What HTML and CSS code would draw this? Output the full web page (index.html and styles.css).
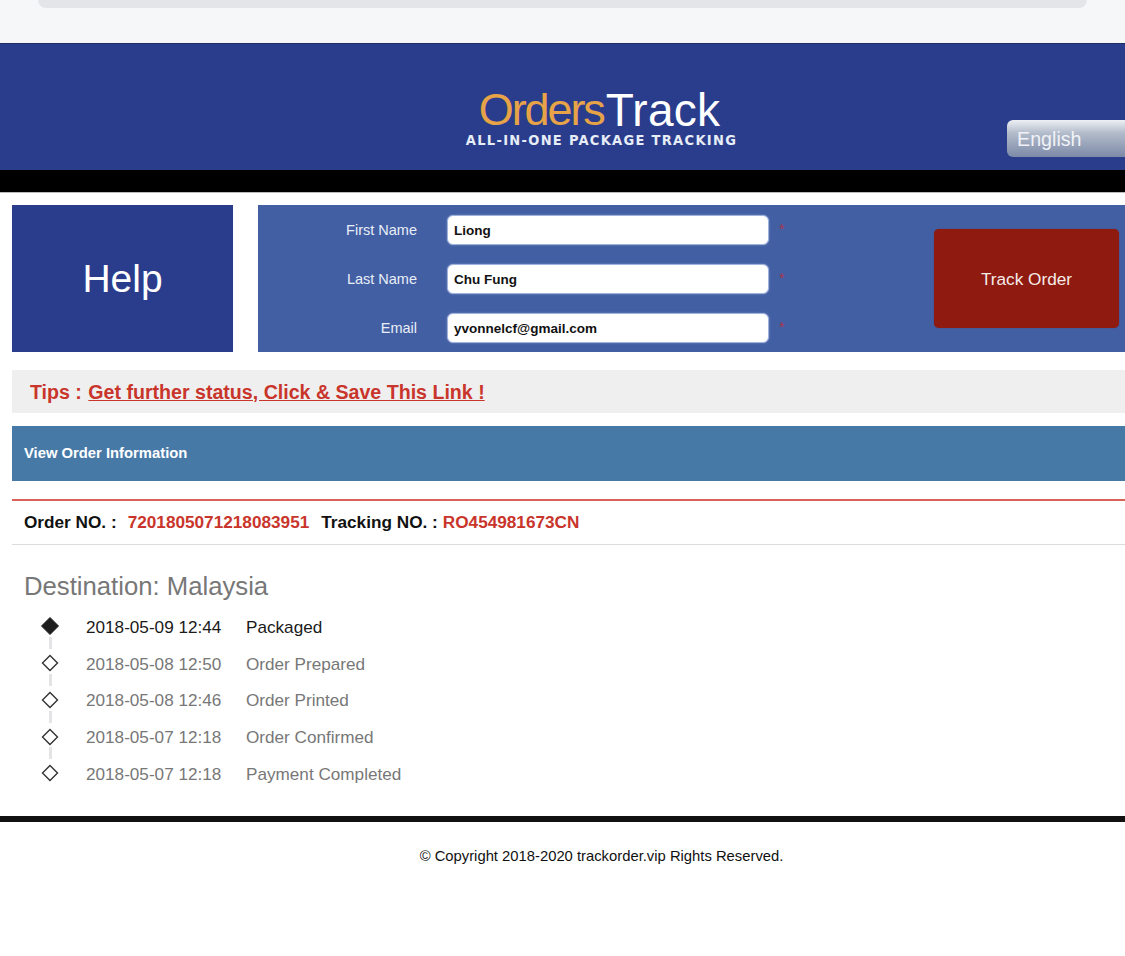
FILE: index.html
```html
<!DOCTYPE html>
<html lang="en">
<head>
<meta charset="utf-8">
<title>OrdersTrack</title>
<link rel="stylesheet" href="styles.css">
</head>
<body>
<div class="topstrip"><div class="urlbar"></div></div>
<header class="header">
  <div class="logo">
    <div class="logo-main"><span class="logo-orders">Orders</span><span class="logo-track">Track</span></div>
    <div class="logo-tag">ALL-IN-ONE PACKAGE TRACKING</div>
  </div>
  <div class="lang">English</div>
</header>
<div class="blackbar"></div>
<main class="main">
  <section class="search">
    <div class="help">Help</div>
    <form class="form">
      <div class="fields">
        <div class="field"><label class="label">First Name</label><div class="input">Liong</div><span class="req">*</span></div>
        <div class="field"><label class="label">Last Name</label><div class="input">Chu Fung</div><span class="req">*</span></div>
        <div class="field"><label class="label">Email</label><div class="input">yvonnelcf@gmail.com</div><span class="req">*</span></div>
      </div>
      <div class="track-btn">Track Order</div>
    </form>
  </section>
  <div class="tips">Tips : <a class="tips-link" href="#">Get further status, Click &amp; Save This Link !</a></div>
  <div class="view-head">View Order Information</div>
  <div class="order-row">
    <span class="order-label">Order NO. :</span><span class="order-val order-num">7201805071218083951</span><span class="order-label">Tracking NO. :</span><span class="order-val track-num">RO454981673CN</span>
  </div>
  <h2 class="dest">Destination: Malaysia</h2>
  <ul class="timeline">
    <li class="step current"><svg class="dia" width="20" height="20" viewBox="0 0 20 20"><path d="M10 1.5 18.5 10 10 18.5 1.5 10Z" fill="#1e1e1e" stroke="#1e1e1e"/></svg><span class="time">2018-05-09 12:44</span><span class="what">Packaged</span></li>
    <li class="step"><svg class="dia" width="20" height="20" viewBox="0 0 20 20"><path d="M10 2.5 17.5 10 10 17.5 2.5 10Z" fill="#fff" stroke="#333" stroke-width="1.4"/></svg><span class="time">2018-05-08 12:50</span><span class="what">Order Prepared</span></li>
    <li class="step"><svg class="dia" width="20" height="20" viewBox="0 0 20 20"><path d="M10 2.5 17.5 10 10 17.5 2.5 10Z" fill="#fff" stroke="#333" stroke-width="1.4"/></svg><span class="time">2018-05-08 12:46</span><span class="what">Order Printed</span></li>
    <li class="step"><svg class="dia" width="20" height="20" viewBox="0 0 20 20"><path d="M10 2.5 17.5 10 10 17.5 2.5 10Z" fill="#fff" stroke="#333" stroke-width="1.4"/></svg><span class="time">2018-05-07 12:18</span><span class="what">Order Confirmed</span></li>
    <li class="step last"><svg class="dia" width="20" height="20" viewBox="0 0 20 20"><path d="M10 2.5 17.5 10 10 17.5 2.5 10Z" fill="#fff" stroke="#333" stroke-width="1.4"/></svg><span class="time">2018-05-07 12:18</span><span class="what">Payment Completed</span></li>
  </ul>
</main>
<footer class="footer">© Copyright 2018-2020 trackorder.vip Rights Reserved.</footer>
</body>
</html>
```
FILE: styles.css
```css
* { box-sizing: border-box; }
html, body { margin: 0; padding: 0; }
body { background: #fff; font-family: "Liberation Sans", Arial, sans-serif; color: #111; overflow-x: hidden; }

.topstrip { height: 43px; background: #f6f7f9; padding: 0 38px; }
.urlbar { height: 8px; background: #e4e5e9; border-radius: 0 0 14px 14px; }

.header { height: 127px; background: #2a3d8c; border-top: 1px solid #1f2c66; display: flex; padding-left: 467px; }
.logo { width: 269px; padding-top: 44px; display: flex; flex-direction: column; align-items: center; }
.logo-main { font-size: 45px; line-height: 44px; display: flex; margin-right: 4px; }
.logo-orders { color: #e6a347; letter-spacing: -2.1px; }
.logo-track { color: #fff; font-size: 46px; letter-spacing: 0.25px; margin-left: 2px; }
.logo-tag { font-family: "DejaVu Sans", sans-serif; font-weight: 700; font-stretch: condensed; font-size: 14.5px; line-height: 16px; letter-spacing: 1.3px; color: #e6edf7; white-space: nowrap; }
.lang { margin-left: auto; margin-top: 76px; width: 118px; height: 37px; border-radius: 6px 0 0 6px; background: linear-gradient(#eef0f4 0%, #b3bccb 35%, #7d8aa8 100%); color: #f0f2f7; font-size: 19.7px; line-height: 39px; padding-left: 10px; }

.blackbar { height: 23px; background: #000; border-bottom: 1px solid #bbb; }

.main { padding: 12px 0 0 12px; }
.search { display: flex; height: 147px; gap: 25px; }
.help { width: 221px; background: #2a3d8c; color: #fff; font-size: 39px; display: flex; align-items: center; justify-content: center; }
.form { flex: 1; background: #435fa3; display: flex; align-items: flex-start; }
.fields { width: 676px; padding-top: 10px; display: flex; flex-direction: column; gap: 19px; }
.field { display: flex; align-items: center; height: 30px; }
.label { width: 159px; text-align: right; color: #e8eef8; font-size: 14.5px; }
.input { width: 322px; height: 30px; margin-left: 30px; background: #fff; border: 1px solid #9fb2dc; border-radius: 6px; box-shadow: 0 0 2px #7f96cc; font-size: 13.5px; font-weight: 700; line-height: 29px; padding-left: 6px; color: #111; }
.req { color: #a8344f; font-size: 14px; margin-left: 10px; margin-top: -2px; }
.track-btn { width: 185px; height: 99px; margin: 24px 0 0 0; padding-top: 1px; background: #8f1a0f; border-radius: 5px; color: #f5ecea; font-size: 17.2px; display: flex; align-items: center; justify-content: center; box-shadow: 0 0 1px #6a2030; }

.tips { margin-top: 18px; height: 43px; background: #efefef; padding-left: 18px; font-size: 19.6px; font-weight: 700; line-height: 45px; color: #c9352b; }
.tips-link { color: #c9352b; text-decoration: underline; margin-left: 1px; }
.view-head { margin-top: 13px; height: 55px; background: #4779a7; color: #fff; font-size: 14.8px; font-weight: 700; line-height: 54px; padding-left: 12px; }
.order-row { margin-top: 18px; height: 46px; border-top: 2px solid #d9625a; border-bottom: 1px solid #dcdcdc; padding-left: 12px; font-size: 17.2px; font-weight: 700; line-height: 43px; white-space: nowrap; }
.order-num { margin: 0 12px 0 11px; }
.order-val { color: #c9352b; }
.track-num { margin-left: 5px; }
.dest { margin: 26px 0 0 12px; font-size: 25.7px; line-height: 30px; font-weight: 400; color: #777; }
.timeline { list-style: none; margin: 8px 0 0 28px; padding: 0; }
.step { position: relative; display: flex; align-items: center; height: 36.75px; color: #777; font-size: 17.15px; }
.step:not(.last)::after { content: ""; position: absolute; left: 9px; top: 28px; width: 3px; height: 12px; background: #e4e4e6; }
.dia { position: relative; z-index: 1; flex: none; margin-top: -2px; }
.current { color: #1a1a1a; }
.time { margin-left: 26px; width: 160px; white-space: nowrap; }

.footer { margin-top: 23px; border-top: 6px solid #111; padding: 25px 0 0 78px; text-align: center; font-size: 14.8px; line-height: 18px; color: #111; height: 140px; }
```
